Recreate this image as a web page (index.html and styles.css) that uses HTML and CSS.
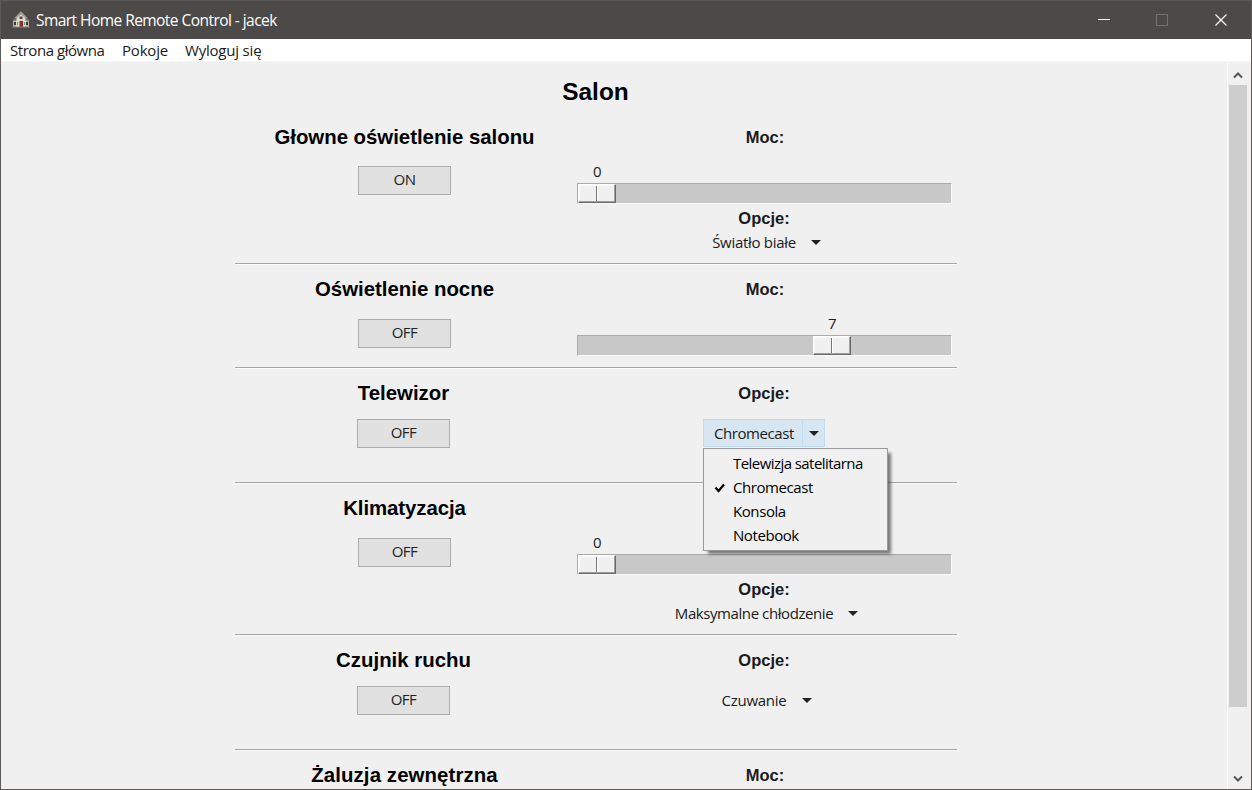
FILE: index.html
```html
<!DOCTYPE html>
<html lang="pl">
<head>
<meta charset="utf-8">
<title>Smart Home Remote Control - jacek</title>
<link rel="stylesheet" href="styles.css">
</head>
<body>
<div class="window">
  <header class="titlebar">
    <svg class="app-icon" width="18" height="18" viewBox="0 0 18 18">
      <path d="M1 9h16v7H1z" fill="#b5afa5"/>
      <path d="M4 7l5-4 5 4v9H4z" fill="#dcd6cb"/>
      <path d="M3 7.5L9 1.5l6 6" fill="none" stroke="#a79d92" stroke-width="1.6"/>
      <path d="M.5 9.5L3 7h1.5v2.5zM17.5 9.5L15 7h-1.5v2.5z" fill="#756c66"/>
      <path d="M7.5 5.5h3V8h-3z" fill="#514b46"/>
      <path d="M2 11h2v3H2zM14 11h2v3h-2z" fill="#3f3b39"/>
      <path d="M5 11h1v3H5zM12 11h1v3h-1z" fill="#8a857d"/>
      <path d="M7.5 10H11v6H7.5z" fill="#8c2c2b"/>
      <path d="M.5 16h17" stroke="#8b8378"/>
    </svg>
    <span class="title">Smart Home Remote Control - jacek</span>
    <svg class="controls" width="130" height="14" viewBox="0 0 130 14">
      <path d="M0 6.5h12" stroke="#fff"/>
      <path d="M58.5 1.5h11v11h-11z" fill="none" stroke="#75736f"/>
      <path d="M117.5 1.5l11 11M128.5 1.5l-11 11" stroke="#fff" stroke-width="1.2"/>
    </svg>
  </header>
  <nav class="menubar">
    <span class="m-home">Strona główna</span><span class="m-rooms">Pokoje</span><span class="m-logout">Wyloguj się</span>
  </nav>
  <div class="body">
    <main class="content">
      <h1 class="room">Salon</h1>

      <section class="device first">
        <div class="left"><h2 class="name">Głowne oświetlenie salonu</h2><button class="toggle">ON</button></div>
        <div class="right">
          <h3 class="label power">Moc:</h3>
          <div class="slider"><div class="value">0</div><div class="track"><div class="thumb"></div></div></div>
          <h3 class="label options">Opcje:</h3>
          <div class="select s-light"><span>Światło białe</span><i class="arrow"></i></div>
        </div>
      </section>

      <section class="device short">
        <div class="left"><h2 class="name">Oświetlenie nocne</h2><button class="toggle">OFF</button></div>
        <div class="right">
          <h3 class="label power">Moc:</h3>
          <div class="slider at-seven"><div class="value">7</div><div class="track"><div class="thumb"></div></div></div>
        </div>
      </section>

      <section class="device medium">
        <div class="left"><h2 class="name n-tv">Telewizor</h2><button class="toggle">OFF</button></div>
        <div class="right">
          <h3 class="label">Opcje:</h3>
          <div class="select open">
            <span class="chosen">Chromecast</span><span class="drop"><i class="arrow"></i></span>
            <ul class="menu">
              <li class="i-sat">Telewizja satelitarna</li>
              <li><svg class="check" width="12" height="10" viewBox="0 0 12 10"><path d="M1.5 4.5l3 3.5L10 1.5" fill="none" stroke="#000" stroke-width="2.2"/></svg>Chromecast</li>
              <li>Konsola</li>
              <li>Notebook</li>
            </ul>
          </div>
        </div>
      </section>

      <section class="device">
        <div class="left"><h2 class="name n-air">Klimatyzacja</h2><button class="toggle">OFF</button></div>
        <div class="right">
          <h3 class="label">&nbsp;</h3>
          <div class="slider"><div class="value">0</div><div class="track"><div class="thumb"></div></div></div>
          <h3 class="label options">Opcje:</h3>
          <div class="select s-cool"><span>Maksymalne chłodzenie</span><i class="arrow"></i></div>
        </div>
      </section>

      <section class="device medium">
        <div class="left"><h2 class="name n-motion">Czujnik ruchu</h2><button class="toggle">OFF</button></div>
        <div class="right">
          <h3 class="label">Opcje:</h3>
          <div class="select s-watch"><span>Czuwanie</span><i class="arrow"></i></div>
        </div>
      </section>

      <section class="device last">
        <div class="left"><h2 class="name n-blind">Żaluzja zewnętrzna</h2></div>
        <div class="right"><h3 class="label power">Moc:</h3></div>
      </section>
    </main>
    <aside class="scrollbar">
      <svg width="10" height="8" viewBox="0 0 10 8"><path d="M1 6.5l4-4 4 4" fill="none" stroke="#555" stroke-width="2"/></svg>
      <div class="bar"></div>
      <svg class="down" width="10" height="8" viewBox="0 0 10 8"><path d="M1 1.5l4 4 4-4" fill="none" stroke="#555" stroke-width="2"/></svg>
    </aside>
  </div>
</div>
</body>
</html>
```
FILE: styles.css
```css
* { box-sizing: border-box; }
body { margin: 0; background: #f0f0f0; color: #1b1b1b; font: 15px/24px "Open Sans", "Noto Sans", sans-serif; letter-spacing: -0.42px; }
h1, h2, h3, ul { margin: 0; padding: 0; }
.window { width: 1252px; height: 790px; display: flex; flex-direction: column; border: 1px solid #5b5a58; overflow: hidden; }
.titlebar { height: 38px; flex: none; display: flex; align-items: center; background: #4c4a48; color: #fff; padding: 0 23px 0 11px; }
.title { margin-left: 6px; font-size: 15.5px; letter-spacing: -0.55px; white-space: nowrap; }
.controls { margin-left: auto; }
.menubar { height: 23px; flex: none; display: flex; padding: 1px 0 0 9px; background: #fff; border-bottom: 1px solid #f7f7f7; white-space: nowrap; line-height: 21px; }
.m-home { width: 112px; letter-spacing: -0.45px; }
.m-rooms { width: 63px; letter-spacing: -0.2px; }
.m-logout { letter-spacing: -0.2px; }
.body { flex: 1; min-height: 0; display: flex; background: #f0f0f0; }
.content { flex: 1; overflow: hidden; padding-left: 234px; }
.room { width: 721px; height: 50px; padding-top: 15px; text-align: center; color: #000; font: bold 24.4px/29px "Liberation Sans", Arial, sans-serif; letter-spacing: 0; }
.device { width: 722px; height: 152px; display: grid; grid-template-columns: 339px 383px; border-bottom: 1px solid #fafafa; box-shadow: inset 0 -1px #a5a5a5; }
.first { height: 153px; padding-top: 1px; }
.short { height: 104px; }
.medium { height: 115px; }
.last { border: 0; box-shadow: none; }
.left { display: flex; flex-direction: column; align-items: center; padding-top: 12px; }
.name { height: 42px; color: #000; font: bold 20.4px/25px "Liberation Sans", Arial, sans-serif; letter-spacing: 0; white-space: nowrap; }
.first .name { height: 41px; letter-spacing: -0.02px; }
.n-tv, .n-motion { margin-left: -2px; }
.n-air { letter-spacing: -0.08px; }
.n-blind { letter-spacing: 0.1px; }
.toggle { width: 93px; height: 29px; padding: 0 0 2px; border: 1px solid #adadad; background: #e1e1e1; color: #222; font: inherit; line-height: 25px; letter-spacing: -0.5px; }
.medium .name { height: 38px; }
.medium .toggle { margin-left: -2px; }
.right { display: flex; flex-direction: column; align-items: center; padding: 12px 6px 0 3px; }
.label { height: 35px; font: bold 16.5px/25px "Liberation Sans", Arial, sans-serif; letter-spacing: 0; }
.power { padding-left: 2px; }
.slider { width: 375px; }
.value { width: 41px; height: 23px; text-align: center; line-height: 22px; }
.track { height: 21px; background: #c8c8c8; border: 1px solid; border-color: #aaa #fafafa #fafafa #aaa; }
.thumb { width: 38px; height: 19px; border: 1px solid; border-color: #fff #696969 #696969 #fff; background: linear-gradient(90deg, transparent 18px, #777 18px, #777 19px, #fff 19px, #fff 20px, transparent 20px), #f0f0f0; background-position: -1px 0; box-shadow: inset -1px -1px #a0a0a0, inset 1px 1px #fafafa; }
.first .slider { margin-top: -1px; }
.first .value { height: 24px; line-height: 24px; }
.at-seven .value, .at-seven .thumb { margin-left: 235px; }
.options { height: 24px; margin-top: 2px; }
.select { display: flex; align-items: center; height: 24px; padding-left: 5px; white-space: nowrap; }
.arrow { width: 0; height: 0; border: 5px solid transparent; border-top-color: #222; border-bottom: 0; margin-left: 15px; }
.s-light { letter-spacing: -0.3px; }
.medium .select { height: 28px; margin-top: 3px; }
.medium .s-watch { letter-spacing: -0.25px; }
.open { position: relative; width: 122px; padding-left: 0; background: #d8e6f2; border: 1px solid #c0dcf3; }
.medium .open { padding-left: 0; }
.chosen { width: 98px; padding-left: 10px; }
.drop { flex: 1; align-self: stretch; display: flex; align-items: center; justify-content: center; border-left: 1px solid #c0dcf3; }
.drop .arrow { margin: 0; }
.menu { position: absolute; left: -1px; top: 28px; z-index: 2; width: 185px; height: 103px; padding: 2px 0 0 29px; list-style: none; background: #f0f0f0; border: 1px solid #999; box-shadow: 4px 4px 3px -1px rgba(0,0,0,.5); color: #000; }
.menu li { position: relative; height: 24px; }
.i-sat { letter-spacing: -0.56px; }
.check { position: absolute; left: -19px; top: 8px; }
.scrollbar { width: 24px; display: flex; flex-direction: column; align-items: center; padding: 9px 4px 6px 0; border-left: 1px solid #fff; }
.bar { width: 18px; height: 622px; margin-top: 6px; background: #cdcdcd; }
.down { margin-top: auto; }
```
